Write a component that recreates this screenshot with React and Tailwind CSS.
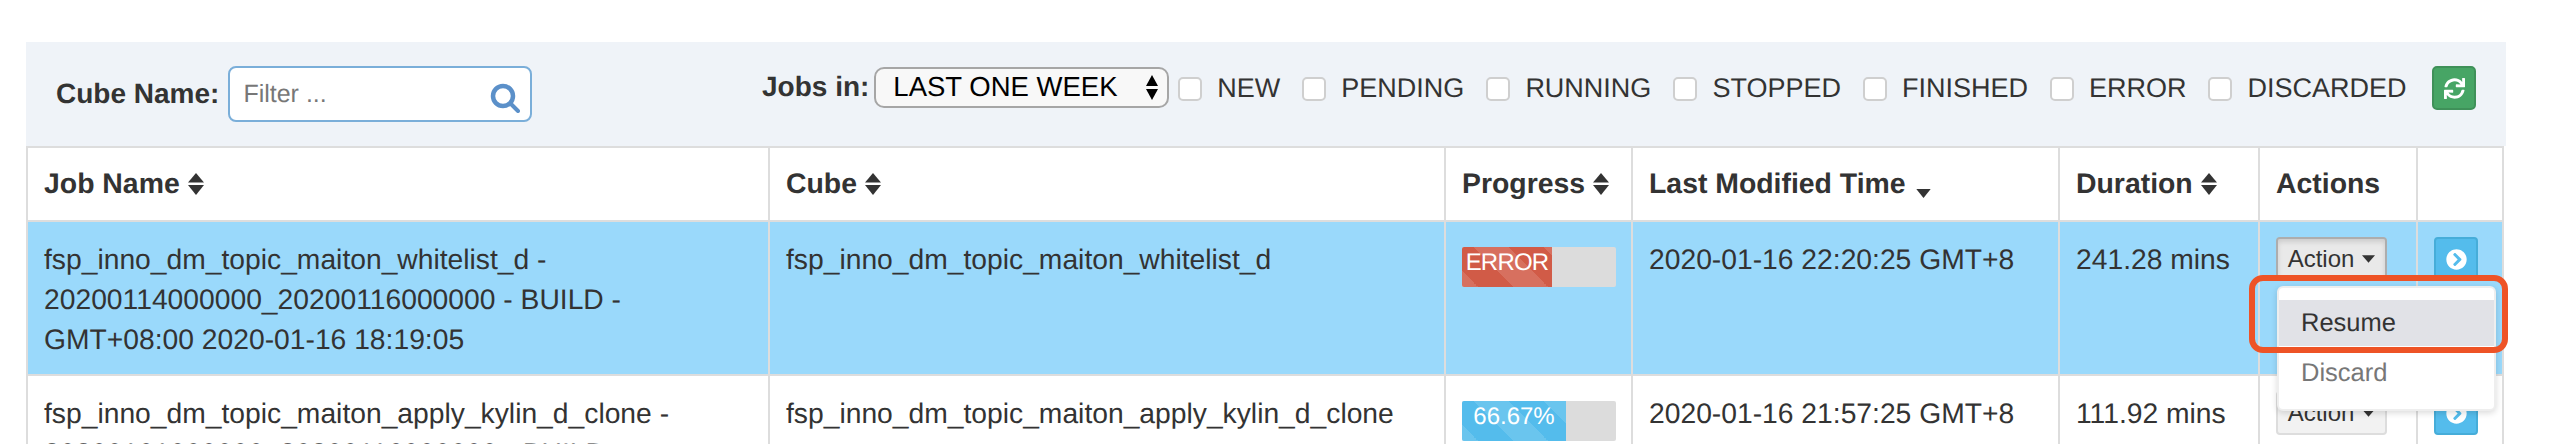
import { FaChevronCircleRight, FaSync } from 'react-icons/fa';

const statuses = ['NEW', 'PENDING', 'RUNNING', 'STOPPED', 'FINISHED', 'ERROR', 'DISCARDED'];

const stripes = 'bg-[linear-gradient(45deg,rgba(255,255,255,0.13)_25%,transparent_25%,transparent_50%,rgba(255,255,255,0.13)_50%,rgba(255,255,255,0.13)_75%,transparent_75%,transparent)] bg-[length:70px_70px] bg-[position:11px_0]';

function SortIcon() {
  return (
    <svg viewBox="0 0 16 22" className="inline-block w-[16px] h-[22px] ml-[8px] align-[-2px] fill-[#333]">
      <path d="M8 0 L16 9.5 H0 Z" />
      <path d="M0 12 H16 L8 22 Z" />
    </svg>
  );
}

function HeaderCell({ children, sort }) {
  return (
    <th className="border-2 border-[#ddd] px-[16px] text-left text-[28.4px] font-bold align-middle">
      {children}
      {sort === 'both' && <SortIcon />}
      {sort === 'down' && (
        <svg viewBox="0 0 16 10" className="inline-block w-[15px] h-[9px] ml-[10px] align-[-5px] fill-[#333]">
          <path d="M0 0 H16 L8 10 Z" />
        </svg>
      )}
    </th>
  );
}

function Progress({ value, color, width, tight }) {
  return (
    <div className="h-[40px] w-[154px] rounded-[2px] bg-[#dcdcdc] overflow-hidden">
      <div className={`h-full text-white text-[24px] leading-[32px] text-center ${tight ? 'tracking-[-0.8px]' : ''} ${color} ${stripes}`} style={{ width }}>
        {value}
      </div>
    </div>
  );
}

function ActionCell({ active }) {
  return (
    <td className="border-2 border-[#ddd] px-[16px] pt-[15px] align-top">
      <button className={`h-[44px] w-[111px] rounded-[4px] border-2 text-[24px] text-[#333] flex items-center justify-center gap-[8px] ${active ? 'bg-[#e9e9e9] border-[#adadad] shadow-[inset_0_3px_5px_rgba(0,0,0,0.125)]' : 'bg-[#f2f2f2] border-[#ddd]'}`}>
        Action
        <svg viewBox="0 0 14 8" className="w-[13px] h-[8px] fill-[#333]"><path d="M0 0 H14 L7 8 Z" /></svg>
      </button>
    </td>
  );
}

function GoCell() {
  return (
    <td className="border-2 border-[#ddd] px-[16px] pt-[15px] align-top">
      <button className="h-[44px] w-[44px] rounded-[4px] bg-[#54bcec] border-2 border-[#46add9] flex items-center justify-center">
        <FaChevronCircleRight size={21} className="text-white" />
      </button>
    </td>
  );
}

export default function App() {
  const td = 'border-2 border-[#ddd] px-[16px] pt-[17px] align-top';
  return (
    <div className="relative h-[444px] overflow-hidden bg-white text-[#333] whitespace-nowrap [text-rendering:geometricPrecision] font-['Liberation_Sans',Arial,sans-serif]">
      <div className="ml-[26px] mt-[42px] w-[2480px] h-[104px] pt-[24px] pr-[30px] bg-[#eff3f8] flex items-start">
        <div className="flex items-center w-[506px] shrink-0">
          <span className="ml-[30px] font-bold text-[28px]">Cube Name:</span>
          <div className="relative ml-[9px] w-[304px] h-[56px] shrink-0 bg-white border-2 border-[#7aaed9] rounded-[8px] flex items-center px-[13px] pt-[2px]">
            <span className="text-[#777] text-[25px]">Filter ...</span>
            <svg viewBox="0 0 30 30" className="absolute right-[10px] top-[15px] w-[30px] h-[30px] fill-none stroke-[#5b90c9]">
              <circle cx="13" cy="13" r="10" strokeWidth="4.5" />
              <path d="M21 21 L28 28" strokeWidth="4" strokeLinecap="round" />
            </svg>
          </div>
        </div>
        <div className="ml-[230px] flex items-center h-[42px]">
          <span className="font-bold text-[28px]">Jobs in:</span>
          <div className="ml-[5px] w-[295px] h-[41px] shrink-0 bg-[#f8f8f8] border-2 border-[#a6a6a6] rounded-[10px] flex items-center justify-between pl-[17px] pr-[9px] text-black text-[27.5px]">
            LAST ONE WEEK
            <svg viewBox="0 0 12 25" className="w-[12px] h-[25px] fill-black"><path d="M6 0 L12 11 H0 Z" /><path d="M0 14 H12 L6 25 Z" /></svg>
          </div>
          <div className="ml-[9px] flex items-center">
            {statuses.map(s => (
              <label key={s} className="flex items-center mr-[22px] text-[27px] mt-[3px]">
                <span className="w-[24px] h-[24px] rounded-[5px] bg-white border-2 border-[#cfcfcf] mr-[15px]" />
                {s}
              </label>
            ))}
          </div>
        </div>
        <button className="ml-auto w-[44px] h-[44px] rounded-[5px] bg-[#47a565] border-2 border-[#3f9159] flex items-center justify-center">
          <FaSync size={21} className="text-white" />
        </button>
      </div>

      <table className="ml-[26px] w-[2478px] table-fixed border-collapse text-[28.25px] leading-[40px]">
        <colgroup>
          <col className="w-[742px]" />
          <col className="w-[676px]" />
          <col className="w-[187px]" />
          <col className="w-[427px]" />
          <col className="w-[200px]" />
          <col className="w-[158px]" />
          <col className="w-[86px]" />
        </colgroup>
        <thead>
          <tr className="h-[74px]">
            <HeaderCell sort="both">Job Name</HeaderCell>
            <HeaderCell sort="both">Cube</HeaderCell>
            <HeaderCell sort="both">Progress</HeaderCell>
            <HeaderCell sort="down">Last Modified Time</HeaderCell>
            <HeaderCell sort="both">Duration</HeaderCell>
            <HeaderCell>Actions</HeaderCell>
            <HeaderCell />
          </tr>
        </thead>
        <tbody>
          <tr className="h-[154px] bg-[#9ad9fb]">
            <td className={td}>
              fsp_inno_dm_topic_maiton_whitelist_d -<br />
              20200114000000_20200116000000 - BUILD -<br />
              GMT+08:00 2020-01-16 18:19:05
            </td>
            <td className={td}>fsp_inno_dm_topic_maiton_whitelist_d</td>
            <td className="border-2 border-[#ddd] px-[16px] pt-[25px] align-top">
              <Progress value="ERROR" color="bg-[#d15b47]" width="90px" tight />
            </td>
            <td className={td}>2020-01-16 22:20:25 GMT+8</td>
            <td className={td}>241.28 mins</td>
            <ActionCell active />
            <GoCell />
          </tr>
          <tr className="bg-white">
            <td className={td}>
              fsp_inno_dm_topic_maiton_apply_kylin_d_clone -<br />
              20200101000000_20200116000000 - BUILD -
            </td>
            <td className={td}>fsp_inno_dm_topic_maiton_apply_kylin_d_clone</td>
            <td className="border-2 border-[#ddd] px-[16px] pt-[25px] align-top">
              <Progress value="66.67%" color="bg-[#54bcec]" width="104px" />
            </td>
            <td className={td}>2020-01-16 21:57:25 GMT+8</td>
            <td className={td}>111.92 mins</td>
            <ActionCell />
            <GoCell />
          </tr>
        </tbody>
      </table>

      {/* dropdown menu over the table */}
      <div className="absolute left-[2277px] top-[286px] w-[219px] h-[125px] bg-white rounded-[6px] border-2 border-[#eee] shadow-[0_2px_6px_rgba(0,0,0,0.15)] pt-[12px] text-[25.5px] text-[#333]">
        <div className="h-[46px] leading-[46px] pl-[22px] bg-[#e1e2e7]">Resume</div>
        <div className="h-[46px] leading-[54px] pl-[22px] text-[#777]">Discard</div>
      </div>
      {/* red annotation box */}
      <div className="absolute left-[2249px] top-[275px] w-[259px] h-[78px] rounded-[14px] border-[6px] border-[#ee5326]" />
    </div>
  );
}
